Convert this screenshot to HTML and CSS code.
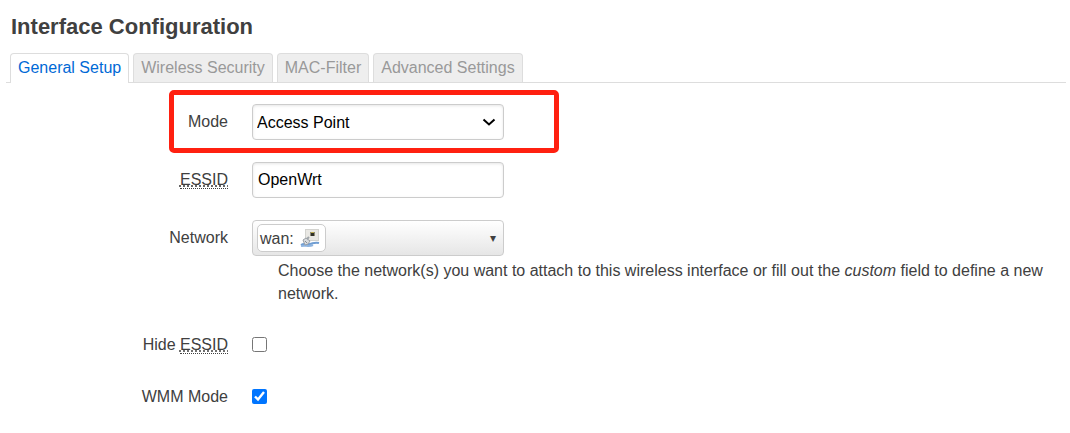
FILE: index.html
```html
<!DOCTYPE html>
<html lang="en">
<head>
<meta charset="utf-8">
<title>Interface Configuration</title>
<link rel="stylesheet" href="styles.css">
</head>
<body>
<main class="section">
  <h1 class="section-title">Interface Configuration</h1>
  <nav class="tabs">
    <a class="tab tab-active" href="#general">General Setup</a>
    <a class="tab" href="#security">Wireless Security</a>
    <a class="tab" href="#macfilter">MAC-Filter</a>
    <a class="tab" href="#advanced">Advanced Settings</a>
  </nav>
  <form class="form">
    <div class="row row-marked">
      <label class="label" for="mode">Mode</label>
      <div class="select-wrap">
        <select class="control select" id="mode"><option>Access Point</option></select>
        <svg class="chevron" viewBox="0 0 14 8" aria-hidden="true"><path d="M1.5 1.5L7 6.5l5.500-5" fill="none" stroke="#000" stroke-width="2"/></svg>
      </div>
    </div>
    <div class="row">
      <label class="label" for="essid"><abbr class="abbr">ESSID</abbr></label>
      <input class="control input" id="essid" type="text" value="OpenWrt">
    </div>
    <div class="row">
      <label class="label" for="network">Network</label>
      <div class="field">
        <button class="control dropdown" id="network" type="button">
          <span class="badge">wan:
            <svg class="badge-icon" viewBox="0 0 20 20" aria-hidden="true">
              <path d="M5 1h14v12H5z" fill="#d3d3cf"/>
              <path d="M6 2h12v10H6z" fill="#e9e8e4"/>
              <path d="M10 4h5v4h-5z" fill="#8b8a78"/>
              <path d="M11 5h3v3h-3z" fill="#303028"/>
              <path d="M11 4h3v1h-3z" fill="#b9a94a"/>
              <path d="M1 17c3-2 5 0 9-1s5-2 9-1" fill="none" stroke="#6f9dd2" stroke-width="2"/>
              <path d="M1 18c4-1 8 1 12-1" fill="none" stroke="#8db3df" stroke-width="2"/>
              <path d="M3 12l3-2 4 3-2 3-3 1z" fill="#d9dcdf" stroke="#9ba0a5"/>
              <path d="M7 11l2-2" stroke="#a0a5aa" stroke-width="2"/>
              <path d="M5 13l2 2" stroke="#858c94"/>
            </svg>
          </span>
          <span class="caret">▾</span>
        </button>
        <p class="help">Choose the network(s) you want to attach to this wireless interface or fill out the <em>custom</em> field to define a new network.</p>
      </div>
    </div>
    <div class="row row-check">
      <label class="label" for="hide">Hide <abbr class="abbr">ESSID</abbr></label>
      <input class="check" id="hide" type="checkbox">
    </div>
    <div class="row row-check">
      <label class="label" for="wmm">WMM Mode</label>
      <input class="check" id="wmm" type="checkbox" checked>
    </div>
  </form>
</main>
</body>
</html>
```
FILE: styles.css
```css
*,
*::after {
  box-sizing: border-box;
}

body {
  margin: 0;
  background: #fff;
  color: #404040;
  font: 16px/23px "Liberation Sans", Arial, sans-serif;
}

.section {
  padding: 12px 4px 0 6px;
}

.section-title {
  margin: 0 0 11px;
  padding-left: 5px;
  font-size: 22px;
  line-height: 30px;
}

.tabs {
  display: flex;
  gap: 4px;
  padding-left: 4px;
  border-bottom: 1px solid #ddd;
}

.tab {
  height: 29px;
  padding: 0 7px;
  border: 1px solid #ddd;
  border-bottom: 0;
  border-radius: 4px 4px 0 0;
  background: #eee;
  color: #999;
  line-height: 28px;
  text-decoration: none;
}

.tab-active {
  height: 30px;
  margin-bottom: -1px;
  background: #fff;
  color: #0069d6;
}

.form {
  display: flex;
  flex-direction: column;
  gap: 22px;
  padding: 21px 0;
}

.row {
  position: relative;
  display: grid;
  grid-template-columns: 222px minmax(0, 1fr);
  column-gap: 24px;
  line-height: 36px;
}

.row-check {
  align-items: center;
  line-height: 30px;
}

.row-marked::after {
  content: "";
  position: absolute;
  top: -14px;
  bottom: -13px;
  left: 163px;
  width: 390px;
  border: 5px solid #ff2010;
  border-radius: 5px;
  pointer-events: none;
}

.label {
  text-align: right;
}

.abbr {
  border-bottom: 1px dotted #404040;
  text-decoration: underline dotted;
}

.control {
  width: 252px;
  height: 36px;
  border: 1px solid #ccc;
  border-radius: 4px;
  background: #fff;
  color: #000;
  font: inherit;
  line-height: 23px;
}

.select,
.input {
  box-shadow: inset 0 1px 3px rgba(0, 0, 0, 0.1);
}

.select-wrap {
  display: grid;
  align-items: center;
  justify-content: start;
}

.select {
  grid-area: 1 / 1;
  padding: 0 24px 0 4px;
  appearance: none;
}

.chevron {
  grid-area: 1 / 1;
  justify-self: end;
  width: 14px;
  height: 8px;
  margin-right: 8px;
  pointer-events: none;
}

.input {
  padding: 0 5px;
}

.dropdown {
  display: flex;
  align-items: center;
  justify-content: space-between;
  padding: 0 7px 0 4px;
  background: linear-gradient(#fff, #e6e6e6);
  color: #404040;
}

.badge {
  display: flex;
  align-items: center;
  gap: 6px;
  height: 28px;
  padding: 0 5px 0 2px;
  border: 1px solid #ccc;
  border-radius: 5px;
  background: #fff;
}

.badge-icon {
  width: 20px;
  height: 20px;
}

.caret {
  font-size: 12px;
}

.help {
  margin: 0;
  padding: 3px 0 3px 26px;
  line-height: 23px;
}

.field {
  display: flex;
  flex-direction: column;
}

.check {
  width: 15px;
  height: 15px;
  margin: 0 0 1px;
  accent-color: #0075ff;
}
```
